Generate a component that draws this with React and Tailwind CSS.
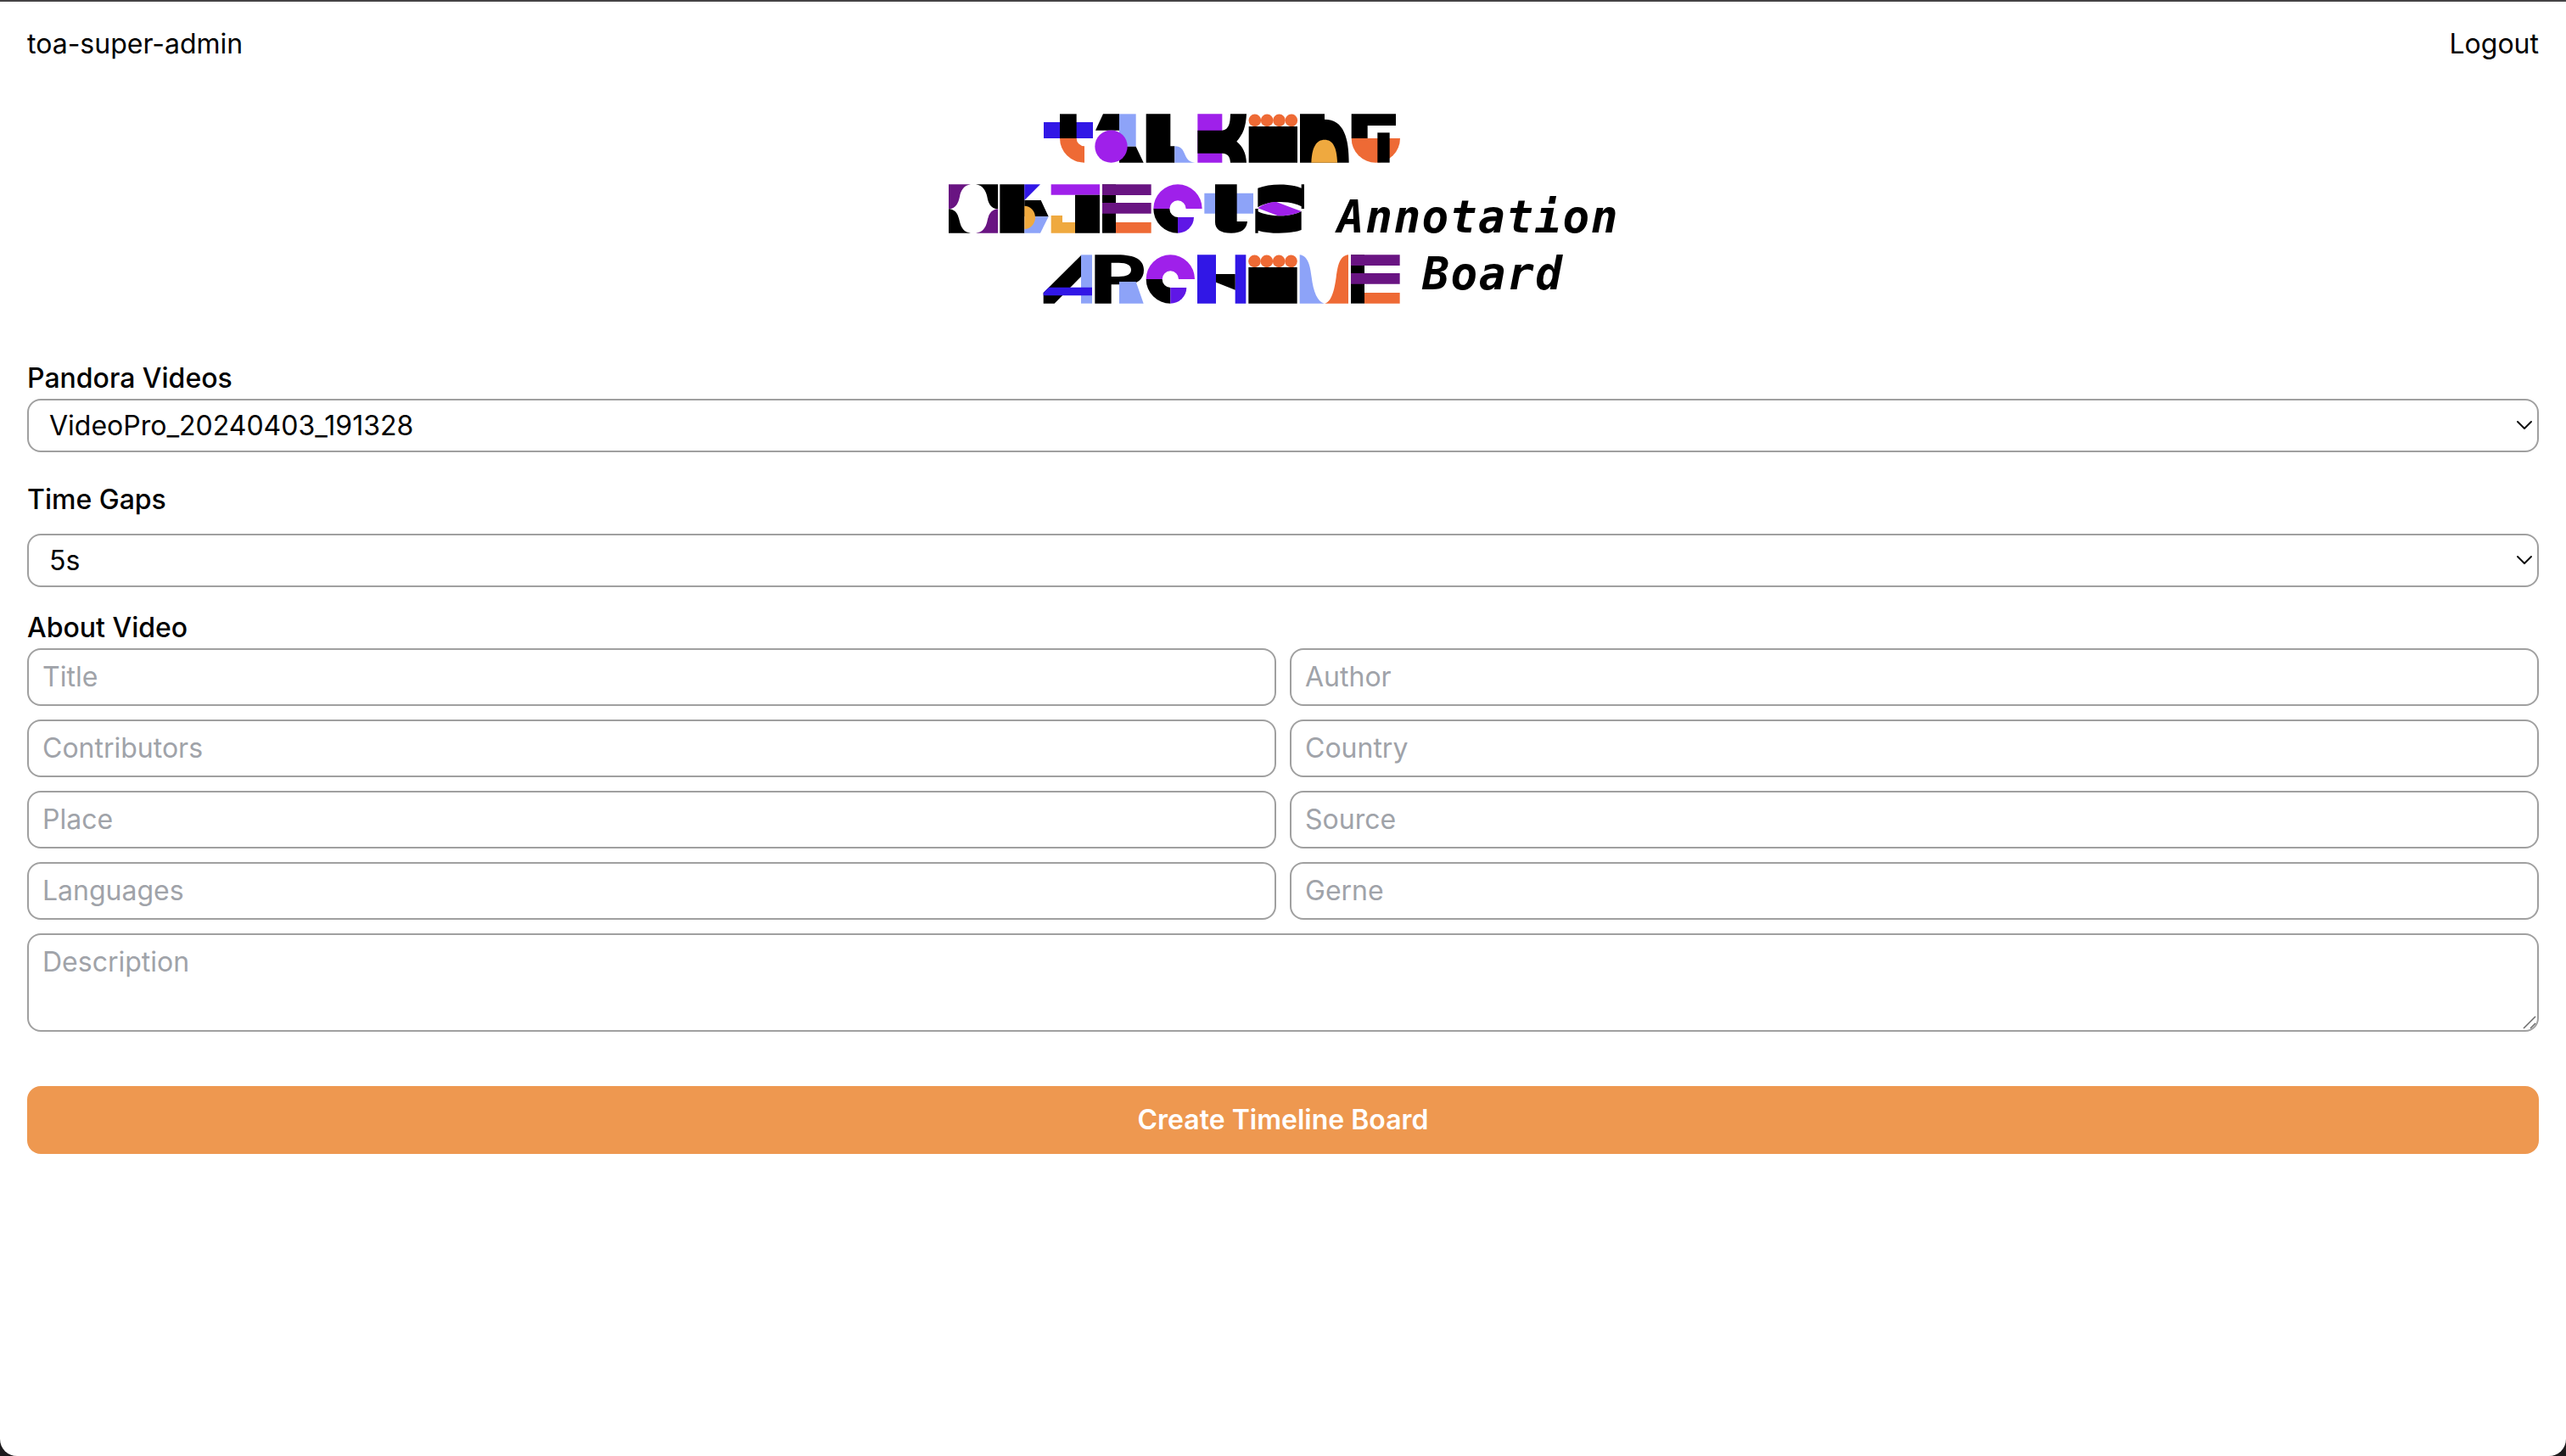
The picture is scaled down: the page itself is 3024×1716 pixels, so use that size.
import React from "react";

const BLACK = "#000000";
const BLUE = "#3117e6";
const SKY = "#8da3f8";
const VIOLET = "#5f17e6";
const PURPLE = "#9f20ea";
const PLUM = "#691482";
const ORANGE = "#ee6a35";
const AMBER = "#efa93f";

function LetterE() {
  return (
    <>
      <path fill={BLACK} d="M0 0H48V172H0Z" />
      <path fill={PLUM} d="M0 0H173V38H0ZM0 65H173V103H0Z" />
      <path fill={ORANGE} d="M48 134H173V172H48Z" />
    </>
  );
}

function LetterC() {
  return (
    <>
      <path fill={PURPLE} d="M0 86A86 86 0 0 1 172 86H115A29 29 0 0 0 57 86Z" />
      <path fill={BLACK} d="M0 86H57A29 30 0 0 0 86 116V172A86 86 0 0 1 0 86Z" />
      <path fill={VIOLET} d="M86 116H143A57 57 0 0 1 86 172Z" />
    </>
  );
}

function LetterI() {
  return (
    <>
      <g fill={ORANGE}>
        <circle cx="21.5" cy="22.5" r="22" />
        <circle cx="64.5" cy="22.5" r="22" />
        <circle cx="107.5" cy="22.5" r="22" />
        <circle cx="150.5" cy="22.5" r="22" />
      </g>
      <path fill={BLACK} d="M0 44H172V172H0Z" />
    </>
  );
}

function Logo() {
  return (
    <svg viewBox="36 0 2400 720" className="h-[240px] w-[800px]" role="img" aria-label="Talking Objects Archive">
      {/* Talking */}
      <path fill={BLUE} d="M390 72H564V129H390Z" />
      <path fill={BLACK} d="M447 43H506V129H447Z" />
      <path fill={ORANGE} d="M447 129H506A28 28 0 0 0 534 157V215A87 86 0 0 1 447 129Z" />
      <path fill={BLACK} d="M600 43H657V101H573Z" />
      <path fill={SKY} d="M657 43H716V158H657Z" />
      <path fill={BLACK} d="M657 158H716L743 215H657Z" />
      <circle fill={PURPLE} cx="628.5" cy="158" r="57.5" />
      <path fill={BLACK} d="M752 43H838V157H853V215H752Z" />
      <path fill={SKY} d="M853 157C900 157 878 213 925 215H853Z" />
      <g transform="translate(810 0)">
        <path fill={PURPLE} d="M124 43H211V215H124Z" />
        <path
          fill={BLACK}
          d="M124 101H211C236 98 239 75 240 43H297C295 88 285 115 262 140C285 160 295 180 297 215H240C239 197 233 182 211 182H124Z"
        />
        <g transform="translate(305 43)">
          <LetterI />
        </g>
        <path fill={BLACK} d="M486 43H573V62C642 62 659 130 659 215H486Z" />
        <path fill={AMBER} d="M526 215C528 158 545 134 573 134C601 134 616 158 618 215Z" />
        <path fill={BLACK} d="M668 43H825V84H725V129H668Z" />
        <path fill={ORANGE} d="M668 129H840A86 86 0 0 1 668 129Z" />
        <path fill={BLACK} d="M760 109H803V215H760Z" />
      </g>

      {/* Objects */}
      <path fill={PLUM} d="M54 292H132C106 296 97 315 93 335C88 358 80 377 54 379Z" />
      <path fill={BLACK} d="M228 292H150C176 296 185 315 190 335C194 358 202 377 228 379Z" />
      <path fill={BLACK} d="M54 379C82 381 88 402 93 424C98 445 108 462 132 464H54Z" />
      <path fill={PLUM} d="M228 379C202 381 194 402 190 424C185 445 174 462 150 464H228Z" />
      <path fill={BLACK} d="M235 292H322V464H235Z" />
      <path fill={BLUE} d="M322 292H378L322 348Z" />
      <path fill={BLACK} d="M322 348H380L407 406H322Z" />
      <path fill={SKY} d="M322 406H407L378 464H322Z" />
      <path fill={AMBER} d="M322 368A38 41 0 0 1 322 450Z" />
      <path fill={PURPLE} d="M416 292H588V329H416Z" />
      <path fill={BLACK} d="M501 329H588V464H501Z" />
      <path fill={AMBER} d="M416 402H456V426H501V464H416Z" />
      <g transform="translate(597 292)">
        <LetterE />
      </g>
      <g transform="translate(778 292)">
        <LetterC />
      </g>
      <g transform="translate(810 0)">
        <path fill={SKY} d="M148 323H321V395H148Z" />
        <path fill={BLACK} d="M186 292H263V423H300C297 450 280 464 243 464C205 464 186 450 186 425Z" />
        <path fill={BLACK} d="M337 305C380 288 450 288 491 305V292H501V378H491V370C455 349 375 348 337 373Z" />
        <path fill={BLACK} d="M328 378H338V388C380 408 450 408 491 387V453C450 468 380 468 338 455V464H328Z" />
        <path fill={PURPLE} d="M337 376C355 362 380 354 403 354L491 387C470 398 440 404 408 403Z" />
      </g>

      {/* Archive */}
      <path fill={BLACK} d="M522 543V618L428 713H389V675Z" />
      <path fill={SKY} d="M522 541H561V713H522Z" />
      <path fill={BLUE} d="M389 675L408 656H561V685H389Z" />
      <path
        fill={BLACK}
        fillRule="evenodd"
        d="M571 541H650C715 541 744 560 744 595C744 628 720 646 680 646H629V713H571ZM629 569V618H655C685 618 699 610 699 594C699 578 685 569 655 569Z"
      />
      <path fill={SKY} d="M657 636H716L743 713H657Z" />
      <g transform="translate(752 541)">
        <LetterC />
      </g>
      <g transform="translate(810 0)">
        <path fill={BLUE} d="M123 541H189V713H123ZM257 541H295V713H257Z" />
        <path fill={BLACK} d="M189 609H257V665L189 638Z" />
        <g transform="translate(304 541)">
          <LetterI />
        </g>
        <path fill={SKY} d="M485 541C515 545 522 580 527 620C533 670 548 708 572 713H485Z" />
        <path fill={ORANGE} d="M657 541C625 545 620 580 614 620C608 665 597 710 572 713H657Z" />
        <g transform="translate(666 541)">
          <LetterE />
        </g>
      </g>

      <g
        fontFamily="'DejaVu Sans Mono', monospace"
        fontSize="158"
        fontWeight="700"
        fontStyle="italic"
        letterSpacing="4.5"
      >
        <text x="1428" y="462">Annotation</text>
        <text x="1729" y="662">Board</text>
      </g>
    </svg>
  );
}

function SelectBox({ value }) {
  return (
    <div className="relative">
      <select className="block h-[63px] w-full appearance-none rounded-2xl border-2 border-[#a0a0a0] bg-white pr-12 pl-6 text-black">
        <option>{value}</option>
      </select>
      <svg
        viewBox="0 0 20 12"
        className="pointer-events-none absolute top-[25px] right-[7px] h-3 w-5"
        fill="none"
        stroke="#111"
        strokeWidth="2"
        strokeLinecap="round"
        strokeLinejoin="round"
      >
        <path d="M2 2L10 10L18 2" />
      </svg>
    </div>
  );
}

const FIELDS = ["Title", "Author", "Contributors", "Country", "Place", "Source", "Languages", "Gerne"];

export default function App() {
  return (
    <div className="h-screen bg-[#1c1a1c] font-['Inter',sans-serif] text-[32px] leading-[48px] text-black">
      <div className="flex h-full flex-col rounded-b-[20px] border-t-2 border-[#454345] bg-white px-8">
        <header className="mt-[26px] flex justify-between">
          <span>toa-super-admin</span>
          <button>Logout</button>
        </header>
        <div className="mt-[44px] flex justify-center">
          <Logo />
        </div>
        <form className="mt-[62px] flex flex-col">
          <label className="font-medium">Pandora Videos</label>
          <SelectBox value="VideoPro_20240403_191328" />
          <label className="mt-8 font-medium">Time Gaps</label>
          <div className="mt-4">
            <SelectBox value="5s" />
          </div>
          <label className="mt-6 font-medium">About Video</label>
          <div className="grid grid-cols-2 gap-4">
            {FIELDS.map((name) => (
              <input
                key={name}
                placeholder={name}
                className="h-[68px] rounded-2xl border-2 border-[#a0a0a0] px-4 pb-[2px] placeholder:text-[#a0a3a9]"
              />
            ))}
            <div className="relative col-span-2">
              <textarea
                placeholder="Description"
                className="block h-[116px] w-full resize-none rounded-2xl border-2 border-[#a0a0a0] px-4 py-2 placeholder:text-[#a0a3a9]"
              />
              <svg
                viewBox="0 0 18 18"
                className="absolute right-[2px] bottom-[1px] h-[18px] w-[18px]"
                stroke="#6b6b6b"
                strokeWidth="1.5"
              >
                <path d="M2 15L16 1M10 15L16 9" />
              </svg>
            </div>
          </div>
          <button type="button" className="mt-16 h-20 rounded-2xl bg-[#ee9850] font-semibold text-white">
            Create Timeline Board
          </button>
        </form>
      </div>
    </div>
  );
}
